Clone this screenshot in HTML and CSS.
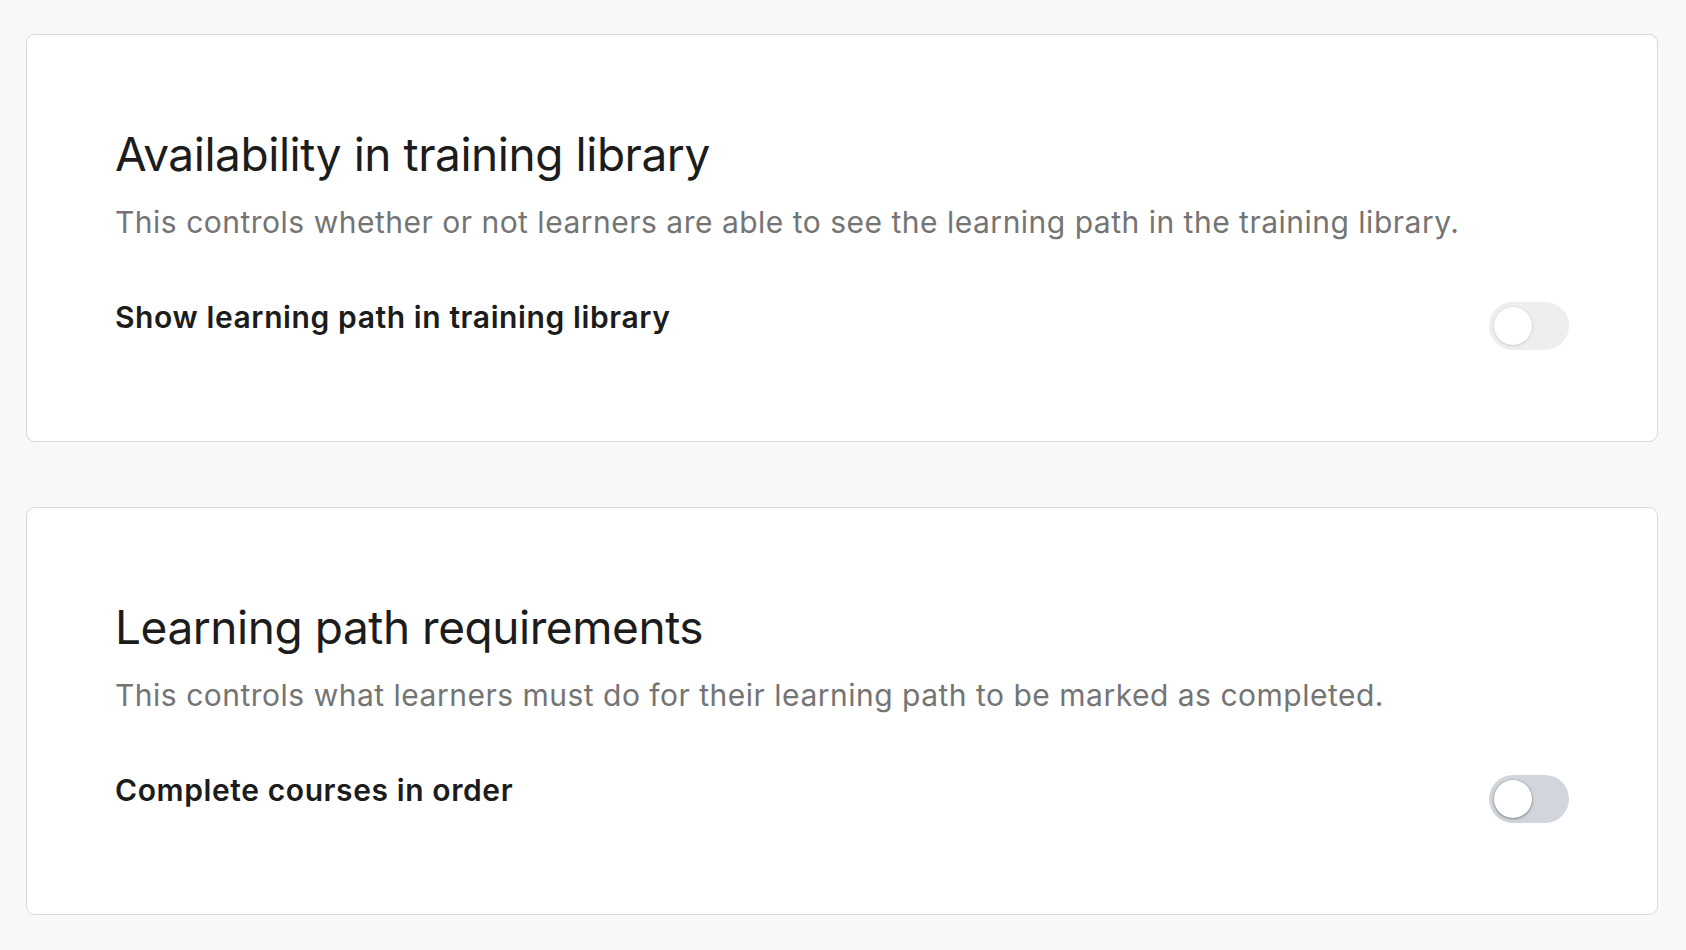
FILE: index.html
```html
<!DOCTYPE html>
<html lang="en">
<head>
<meta charset="utf-8">
<title>Learning path settings</title>
<link rel="stylesheet" href="styles.css">
</head>
<body>
<main class="page">
  <section class="card">
    <h2 class="card-title">Availability in training library</h2>
    <p class="card-desc">This controls whether or not learners are able to see the learning path in the training library.</p>
    <div class="setting-row">
      <span class="setting-label">Show learning path in training library</span>
      <span class="toggle toggle-disabled" role="switch" aria-checked="false" aria-disabled="true"><span class="knob"></span></span>
    </div>
  </section>
  <section class="card">
    <h2 class="card-title">Learning path requirements</h2>
    <p class="card-desc">This controls what learners must do for their learning path to be marked as completed.</p>
    <div class="setting-row">
      <span class="setting-label">Complete courses in order</span>
      <span class="toggle" role="switch" aria-checked="false"><span class="knob"></span></span>
    </div>
  </section>
</main>
</body>
</html>
```

FILE: styles.css
```css
* { box-sizing: border-box; }
html, body {
  margin: 0;
  padding: 0;
  background: #f8f8f8;
  font-family: Inter, "Noto Sans", "Liberation Sans", sans-serif;
}
.page {
  padding: 34px 28px 34px 26px;
  display: flex;
  flex-direction: column;
  gap: 65px;
}
.card {
  background: #ffffff;
  border: 1px solid #d5dae0;
  border-radius: 9px;
  padding: 91px 88px 91px 88px;
}
.card-title {
  margin: 0;
  font-size: 46px;
  line-height: 56px;
  font-weight: 400;
  color: #1c1c1c;
  letter-spacing: -0.45px;
}
.card-desc {
  margin: 19px 0 0 0;
  font-size: 30px;
  line-height: 42px;
  font-weight: 400;
  color: #747474;
  letter-spacing: 0.5px;
}
.setting-row {
  margin-top: 53px;
  display: flex;
  justify-content: space-between;
  align-items: flex-start;
}
.setting-label {
  font-size: 30px;
  line-height: 42px;
  font-weight: 600;
  color: #1c1c1c;
  letter-spacing: 0.6px;
}
.toggle {
  margin-top: 6px;
  width: 80px;
  height: 48px;
  border-radius: 24px;
  background: #d1d6dc;
  position: relative;
  flex: none;
}
.knob {
  position: absolute;
  left: 5px;
  top: 5px;
  width: 38px;
  height: 38px;
  border-radius: 50%;
  background: #ffffff;
  box-shadow: 0 1px 3px rgba(0, 0, 0, 0.35), 0 0 0 1px rgba(0, 0, 0, 0.08);
}
.toggle-disabled {
  opacity: 0.4;
}
```
